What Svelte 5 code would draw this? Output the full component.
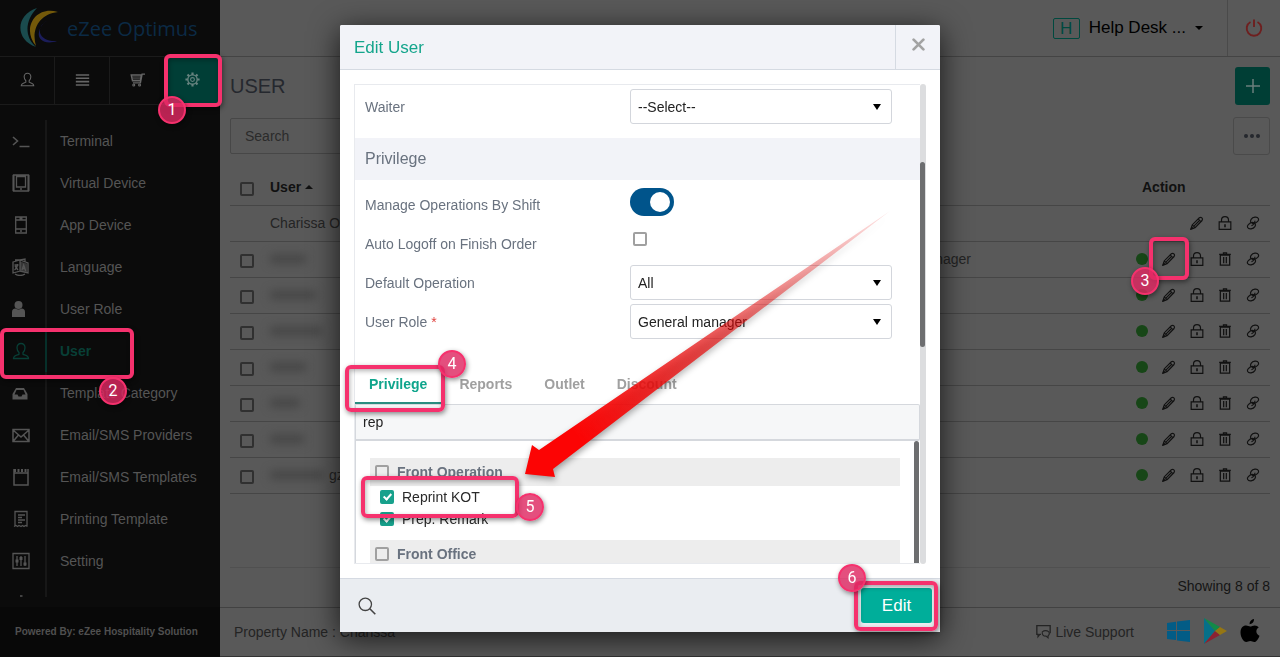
<script>
  // Back office - user list with the "Edit User" dialog and the numbered help steps
  let search = $state('');
  let privilegeSearch = $state('rep');
  let activeTab = $state('Privilege');
  let byShift = $state(true);
  let autoLogoff = $state(false);

  const menu = [
    { label: 'Terminal', icon: 'terminal' },
    { label: 'Virtual Device', icon: 'tablet' },
    { label: 'App Device', icon: 'phone' },
    { label: 'Language', icon: 'language' },
    { label: 'User Role', icon: 'role' },
    { label: 'User', icon: 'user', active: true },
    { label: 'Template Category', icon: 'inbox' },
    { label: 'Email/SMS Providers', icon: 'mail' },
    { label: 'Email/SMS Templates', icon: 'notepad' },
    { label: 'Printing Template', icon: 'receipt' },
    { label: 'Setting', icon: 'sliders' },
    { label: '', icon: 'dot' }
  ];

  // masked = width of the hidden part of the name
  const users = [
    { name: 'Charissa Owner', owner: true },
    { masked: 36, role: 'General manager', step: true },
    { masked: 46 },
    { masked: 52 },
    { masked: 36 },
    { masked: 30 },
    { masked: 34 },
    { masked: 54, name: 'gz' }
  ];

  const tabs = ['Privilege', 'Reports', 'Outlet', 'Discount'];

  let groups = $state([
    {
      name: 'Front Operation',
      checked: false,
      items: [
        { name: 'Reprint KOT', checked: true },
        { name: 'Prep. Remark', checked: true }
      ]
    },
    { name: 'Front Office', checked: false, items: [] }
  ]);
</script>

{#snippet icon(name)}
  <svg class="icon" viewBox="0 0 18 18" fill="none" stroke="currentColor" stroke-width="1.3" aria-hidden="true">
    {#if name === 'terminal'}
      <path d="M1 5l4.500 4-4.500 4M7.500 14.500h10" stroke-width="1.600" />
    {:else if name === 'tablet'}
      <path d="M1.500 1h15v16h-15zM4.500 2.500h9v10.500h-9z" /><path d="M1.500 1v16M16.500 1v16" stroke-width="2" /><path d="M8 15h2" />
    {:else if name === 'phone'}
      <path d="M3.700 1h10.600v16H3.700zM3.700 4h10.600M3.700 13h10.600M8 15h2M7.500 2.500h3" />
    {:else if name === 'language'}
      <path d="M1 4l7-2v11l-7 2zM8 2l8 3v10l-8-2M3 2l5 0 5-1v3M3 16q5 3 10 0" />
      <path d="M8 3.500l7 2v9l-7-2z" fill="currentColor" stroke="none" opacity=".6" />
      <path d="M2.500 7h4M5.500 6q0 4-3 6M3 8l3 4M10 12l1.700-5 2 6M10.500 10.500h3" />
    {:else if name === 'role'}
      <g transform="translate(-2.500 0)"><circle cx="9" cy="5" r="4" fill="currentColor" stroke="none" /><path d="M2.500 17V12q0-3.500 3.500-3.500 3 2 6 0 3.500 0 3.500 3.500v5z" fill="currentColor" stroke="none" /></g>
    {:else if name === 'user'}
      <path d="M9 1.500c-2.500 0-4 1.800-4 4.300 0 2 1 3.800 2 4.700v1.700c-1 .9-5.500 1-5.500 4.300h15c0-3.300-4.500-3.400-5.500-4.300v-1.700c1-.9 2-2.700 2-4.700 0-2.500-1.500-4.300-4-4.300z" />
    {:else if name === 'inbox'}
      <g transform="translate(-1 0)"><path d="M5 4h8l3.500 6v5.500h-15V10z" fill="currentColor" stroke="none" /><path d="M5.500 6h7l2 4.500h-3l-1 2h-3l-1-2h-3z" fill="#0b0b0b" stroke="none" /></g>
    {:else if name === 'mail'}
      <path d="M1 3.500h16v12H1zM1 4l8 7 8-7M1 15.500l5.500-6.500M17 15.500L11.500 9" stroke-width="1.500" />
    {:else if name === 'notepad'}
      <path d="M2 1v16h14V1M2 5h14" stroke-width="1.500" /><path d="M2 2.500h14" stroke-width="3" stroke-dasharray="2 1.500" />
    {:else if name === 'receipt'}
      <path d="M3 16V1.500h12V16M2 16.500l2-1 1.500 1 1.500-1 2 1 1.500-1 1.500 1 1.500-1 2 1M6 5h7M6 7.500h4M6 10h7M6 12.500h4" />
    {:else if name === 'sliders'}
      <path d="M1 1.500h16v15H1z" /><path d="M5 4v10M9 4v10M13 4v10" /><path d="M3.500 9h3M7.500 6.500h3M11.500 12h3" stroke-width="2.800" />
    {:else if name === 'dot'}
      <path d="M8 2h2.500M5 7h8v9H5z" />
    {:else if name === 'list'}
      <path d="M1 3.500h16M1 7.500h16M1 11.500h16M1 15.500h16" stroke-width="1.900" />
    {:else if name === 'cart'}
      <path d="M1.500 3.500h12l-1 7H3zM18 2.500h-3.500L12.500 13H3.500" stroke-width="1.700" /><path d="M2.500 6h10M3 8.300h9.500" stroke-width="1" /><circle cx="4.500" cy="15.500" r="1.200" /><circle cx="11.500" cy="15.500" r="1.200" />
    {:else if name === 'gear'}
      <circle cx="9" cy="9" r="5.600" stroke-width="1.600" /><circle cx="9" cy="9" r="2.300" />
      <path d="M9 .5v3M9 14.500v3M.5 9h3M14.500 9h3M3 3l2 2M13 13l2 2M3 15l2-2M13 5l2-2" stroke-width="2.600" />
    {:else if name === 'power'}
      <path d="M5.500 3A7.300 7.300 0 1 0 12.500 3M9 .5v7.500" stroke-width="1.900" />
    {:else if name === 'pencil'}
      <path d="M1.500 16.500l1.300-5L12 2.300q1.800-1.300 3.300.2t.2 3.300L6.500 15zM10.500 3.800l3.700 3.700M2.800 11.500l3.700 3.500M5 13L12.500 5.500" stroke-width="1.500" />
      <path d="M1 17l1-3 2 2z" fill="currentColor" />
    {:else if name === 'lock'}
      <path d="M1.500 7.500h15v9.800h-15zM4.500 7.500V5.300a4.500 4.500 0 0 1 9 0v2.200" stroke-width="1.500" /><path d="M9 11v3.500M8 11.500h2" stroke-width="2" />
    {:else if name === 'trash'}
      <path d="M3 4h12v13H3zM1.500 3.200h15M7 3V1h4v2" stroke-width="1.600" /><path d="M7.300 6.500v8M10.700 6.500v8" stroke-width="1.600" />
    {:else if name === 'link'}
      <path d="M6.500 8.500C4.500 6 7 2 11.500 1.500S17.500 4.500 15 7 9.500 10.500 7.500 9M11.500 9.500C13.500 12 11 16 6.500 16.500S.5 13.500 3 11 8.500 7.500 10.500 9M7 12.500q4.500-2 4.500-6.500" stroke-width="1.500" />
    {:else if name === 'search'}
      <circle cx="7.300" cy="7.300" r="6.200" /><path d="M11.800 11.800l5.500 5.500" stroke-width="1.600" />
    {:else if name === 'chat'}
      <path d="M6 12.500H4.500L2.500 15v-2.500H1V2h16v9" stroke-width="1.600" /><path d="M7.500 9.500q4-3 8 0 1.500 3-1 4.500v2.500L12 14.500q-5 0-4.500-5z" />
    {/if}
  </svg>
{/snippet}

<div class="page">
  <aside class="sidebar">
    <div class="brand">
      <svg width="40" height="40" viewBox="0 0 40 40" aria-hidden="true">
        <path d="M17 0C-5 7-5 32 16 39 4 29 5 12 17 0z" fill="#1a4b4e" />
        <path d="M38 4C16-3 1 20 16 38 11 22 19 6 38 4z" fill="#73590a" />
        <path d="M27 13c-12 6-9 21 10 20-11 4-20-1-18-9 1-5 4-9 8-11z" fill="#1b1d5a" />
      </svg>
      <span>eZee Optimus</span>
    </div>

    <nav class="modules" aria-label="Modules">
      <button type="button" aria-label="Account">{@render icon('user')}</button>
      <button type="button" aria-label="Orders">{@render icon('list')}</button>
      <button type="button" aria-label="Sales">{@render icon('cart')}</button>
      <button type="button" class="on" aria-label="Configuration">{@render icon('gear')}</button>
    </nav>

    <ul class="menu">
      {#each menu as item}
        <li>
          <a href="#menu" class:active={item.active} aria-label={item.label || 'More'}>
            <span class="menu-icon">{@render icon(item.icon)}</span>
            <span>{item.label}</span>
          </a>
        </li>
      {/each}
    </ul>

    <div class="powered">Powered By: eZee Hospitality Solution</div>

    <div class="mark mark-1"></div>
    <span class="badge badge-1">1</span>
    <div class="mark mark-2"></div>
    <span class="badge badge-2">2</span>
  </aside>

  <main class="main">
    <header class="topbar">
      <button type="button" class="account">
        <span class="initial">H</span>
        <span>Help Desk ...</span>
        <span class="caret down"></span>
      </button>
      <button type="button" class="power" aria-label="Log out">{@render icon('power')}</button>
    </header>

    <section class="content">
      <div class="title-row">
        <h1>USER</h1>
        <button type="button" class="add" aria-label="Add user">
          <svg width="14" height="14" viewBox="0 0 14 14" stroke="currentColor" stroke-width="1.500"><path d="M7 0v14M0 7h14" /></svg>
        </button>
      </div>
      <div class="search-row">
        <input type="text" placeholder="Search" aria-label="Search" bind:value={search} />
        <button type="button" class="more" aria-label="More options"><i></i><i></i><i></i></button>
      </div>

      <table>
        <thead>
          <tr>
            <th class="col-check"><input type="checkbox" aria-label="Select all" /></th>
            <th>User <span class="caret up"></span></th>
            <th class="col-role"></th>
            <th class="col-action">Action</th>
          </tr>
        </thead>
        <tbody>
          {#each users as user}
            <tr>
              <td>
                {#if !user.owner}<input type="checkbox" aria-label="Select user" />{/if}
              </td>
              <td>
                <div class="name">
                  {#if user.masked}<span class="masked" style="width: {user.masked}px"></span>{/if}
                  {user.name ?? ''}
                </div>
              </td>
              <td>{user.role ?? ''}</td>
              <td>
                <div class="actions">
                  {#if !user.owner}<span class="status"></span>{/if}
                  <button type="button" aria-label="Edit">{@render icon('pencil')}</button>
                  <button type="button" aria-label="Lock">{@render icon('lock')}</button>
                  {#if !user.owner}
                    <button type="button" aria-label="Delete">{@render icon('trash')}</button>
                  {/if}
                  <button type="button" aria-label="Link">{@render icon('link')}</button>
                  {#if user.step}
                    <div class="mark mark-3"></div>
                    <span class="badge badge-3">3</span>
                  {/if}
                </div>
              </td>
            </tr>
          {/each}
        </tbody>
      </table>

      <div class="showing">Showing 8 of 8</div>
    </section>

    <footer class="footer">
      <span>Property Name : Charissa</span>
      <div class="links">
        <a href="#support" class="support">{@render icon('chat')} Live Support</a>
        <a href="#windows" aria-label="Windows app">
          <svg width="24" height="24" viewBox="0 0 24 24" fill="#035c86"><path d="M1 4l9-1.300V11H1zM11 2.500L24 1v10H11zM1 12h9v9L1 20zM11 12h13v11l-13-1.500z" /></svg>
        </a>
        <a href="#android" aria-label="Android app">
          <svg width="24" height="26" viewBox="0 0 24 26">
            <path d="M1 0v26l11-13z" fill="#067089" />
            <path d="M1 0l16 9-5 4z" fill="#128a48" />
            <path d="M1 26l16-9-5-4z" fill="#8c2232" />
            <path d="M17 9l7 4-7 4-5-4z" fill="#957613" />
          </svg>
        </a>
        <a href="#ios" aria-label="iOS app">
          <svg width="20" height="24" viewBox="0 0 20 24" fill="#000"><path d="M14 0c.2 3-2 5.200-4.500 5.200C9.400 2.500 11.500.4 14 0zM18.800 8.300c-3.600 2.300-3 7 .7 8.400-1 3-3 6.300-5.200 6.300-1.600 0-2.200-1-4-1s-2.500 1-4 1C3.600 23 .5 18 .5 13.500.5 9 3 6.600 6 6.600c1.700 0 3 1 4.200 1 1.100 0 2.600-1.200 4.600-1.200 1.500 0 3.100.8 4 1.900z" /></svg>
        </a>
      </div>
    </footer>
  </main>
</div>

<div class="overlay">
  <div class="dialog" role="dialog" aria-labelledby="dialog-title">
    <header class="dialog-head">
      <h2 id="dialog-title">Edit User</h2>
      <button type="button" aria-label="Close">
        <svg width="13" height="13" viewBox="0 0 12 12" stroke="currentColor" stroke-width="2.500" stroke-linecap="round"><path d="M1.500 1.500l9 9M10.500 1.500l-9 9" /></svg>
      </button>
    </header>

    <div class="dialog-body">
      <div class="scroller">
        <div class="form">
          <div class="row waiter">
            <label for="waiter">Waiter</label>
            <div class="select">
              <select id="waiter"><option>--Select--</option></select>
            </div>
          </div>

          <h3>Privilege</h3>

          <div class="fields">
            <div class="row">
              <label for="shift">Manage Operations By Shift</label>
              <input id="shift" class="toggle" type="checkbox" role="switch" bind:checked={byShift} />
            </div>
            <div class="row">
              <label for="logoff">Auto Logoff on Finish Order</label>
              <input id="logoff" class="logoff" type="checkbox" bind:checked={autoLogoff} />
            </div>
            <div class="row">
              <label for="operation">Default Operation</label>
              <div class="select">
                <select id="operation"><option>All</option></select>
              </div>
            </div>
            <div class="row">
              <label for="role">User Role <em>*</em></label>
              <div class="select">
                <select id="role"><option>General manager</option></select>
              </div>
            </div>
          </div>

          <div class="tabs" role="tablist">
            {#each tabs as tab}
              <button
                type="button"
                role="tab"
                aria-selected={activeTab === tab}
                class:active={activeTab === tab}
                onclick={() => (activeTab = tab)}>{tab}</button>
            {/each}
          </div>
          <input class="filter" type="text" aria-label="Search privilege" bind:value={privilegeSearch} />

          <div class="privileges">
            <div class="privilege-list">
              {#each groups as group}
                <div class="group">
                  <label class="group-head">
                    <input type="checkbox" bind:checked={group.checked} />
                    {group.name}
                  </label>
                  {#each group.items as item}
                    <label class="item">
                      <input type="checkbox" bind:checked={item.checked} />
                      {item.name}
                    </label>
                  {/each}
                </div>
              {/each}
            </div>
            <div class="thumb"></div>
          </div>
        </div>
        <div class="track"><div class="thumb"></div></div>
      </div>
    </div>

    <footer class="dialog-foot">
      <button type="button" class="find" aria-label="Find">{@render icon('search')}</button>
      <button type="button" class="save">Edit</button>
    </footer>

    <!-- help steps drawn over the dialog -->
    <svg class="arrow" width="600" height="480" viewBox="0 0 600 480" aria-hidden="true">
      <defs>
        <linearGradient id="fade" gradientUnits="userSpaceOnUse" x1="550" y1="186" x2="240" y2="415">
          <stop offset="0" stop-color="#e60000" stop-opacity="0.1" />
          <stop offset="0.6" stop-color="#e80a0a" stop-opacity="0.7" />
          <stop offset="1" stop-color="#fc0404" />
        </linearGradient>
      </defs>
      <path d="M185 449L192 420L199 425L550 186L213 444L215 452Z" fill="url(#fade)" />
    </svg>
    <div class="mark mark-4"></div>
    <span class="badge badge-4">4</span>
    <div class="mark mark-5"></div>
    <span class="badge badge-5">5</span>
    <div class="mark mark-6"></div>
    <span class="badge badge-6">6</span>
  </div>
</div>

<style>
  :global(body) {
    background: #595959;
    overflow: hidden;
  }
  :global(#app) {
    font-family: 'Liberation Sans', Arial, sans-serif;
    font-size: 14px;
  }

  button {
    font: inherit;
    color: inherit;
    background: none;
    border: 0;
    padding: 0;
    display: flex;
    align-items: center;
    justify-content: center;
    cursor: pointer;
  }
  a {
    color: inherit;
    text-decoration: none;
  }
  h1, h2, h3 {
    margin: 0;
    font-weight: 400;
  }
  .icon {
    width: 18px;
    height: 18px;
    display: block;
    flex: none;
  }

  input[type='checkbox'] {
    appearance: none;
    box-sizing: border-box;
    width: 14px;
    height: 14px;
    margin: 0;
    border: 2px solid #a0a0a0;
    border-radius: 2px;
    flex: none;
    position: relative;
  }

  .page {
    display: grid;
    grid-template-columns: 220px 1fr;
    height: 100vh;
  }

  /* ---- sidebar ---- */
  .sidebar {
    position: relative;
    z-index: 1;
    display: flex;
    flex-direction: column;
    min-height: 0;
    background: #0b0b0b;
    color: #555;
  }
  .brand {
    display: flex;
    align-items: center;
    gap: 7px;
    height: 56px;
    padding-left: 20px;
    border-bottom: 1px solid #1b1b1b;
    font-family: 'Open Sans', sans-serif;
    font-size: 20px;
    color: #0b2a45;
  }
  .modules {
    display: grid;
    grid-template-columns: repeat(4, 1fr);
    height: 47px;
    border-bottom: 1px solid #1b1b1b;
    color: #666;
  }
  .modules button {
    padding-bottom: 2px;
    border-right: 1px solid #1b1b1b;
  }
  .modules .icon {
    width: 15px;
    height: 15px;
  }
  .modules .on {
    border-right: 0;
    background: #003e36;
    color: #66837f;
  }
  .menu {
    flex: 1;
    min-height: 0;
    overflow: hidden;
    list-style: none;
    margin: 15px 0 10px;
    padding: 0;
  }
  .menu a {
    display: flex;
    align-items: center;
    gap: 13px;
    height: 42px;
  }
  .menu-icon {
    box-sizing: border-box;
    display: flex;
    align-items: center;
    width: 47px;
    height: 42px;
    padding-left: 12px;
    border-right: 2px solid #171717;
  }
  .menu a.active {
    color: #083f36;
    font-weight: 700;
  }
  .menu a.active .menu-icon {
    border-color: #06302a;
  }
  .powered {
    height: 50px;
    line-height: 50px;
    padding-left: 15px;
    font-size: 10px;
    font-weight: 700;
    color: #505050;
    background: #080808;
  }

  /* ---- main area ---- */
  .main {
    display: flex;
    flex-direction: column;
    min-width: 0;
    background: #595959;
    color: #242424;
  }
  .topbar {
    display: flex;
    justify-content: flex-end;
    height: 56px;
    border-bottom: 1px solid #444;
  }
  .account {
    gap: 9px;
    padding-right: 24px;
    font-size: 17px;
    color: #000;
  }
  .initial {
    width: 25px;
    line-height: 19px;
    border: 1px solid #00493f;
    border-radius: 2px;
    color: #00493f;
    text-align: center;
  }
  .caret {
    display: inline-block;
    border: 4px solid transparent;
  }
  .caret.down {
    border-top-color: #000;
    border-bottom: 0;
  }
  .caret.up {
    border-bottom-color: #111;
    border-top: 0;
    vertical-align: 3px;
  }
  .power {
    width: 53px;
    border-left: 1px solid #4a4a4a;
    color: #6e1f1f;
  }

  .content {
    flex: 1;
    padding: 10px 10px 0;
    display: flex;
    flex-direction: column;
  }
  .title-row,
  .search-row {
    display: flex;
    align-items: center;
    justify-content: space-between;
  }
  .title-row h1 {
    font-size: 20px;
    color: #25282e;
  }
  .add {
    width: 35px;
    height: 38px;
    border-radius: 3px;
    background: #003e35;
    color: #6b7f7c;
  }
  .search-row {
    margin-top: 12px;
  }
  .search-row input {
    box-sizing: border-box;
    width: 320px;
    height: 36px;
    padding: 0 14px;
    border: 1px solid #474747;
    border-radius: 2px;
    background: none;
    font: inherit;
  }
  .search-row input::placeholder {
    color: #2b2b2b;
  }
  .more {
    gap: 2px;
    width: 37px;
    height: 38px;
    border: 1px solid #4a4a4a;
    border-radius: 3px;
  }
  .more i {
    width: 4px;
    height: 4px;
    border-radius: 50%;
    background: #25282e;
  }

  table {
    width: 100%;
    margin-top: 14px;
    border-collapse: collapse;
    table-layout: fixed;
  }
  th, td {
    box-sizing: border-box;
    height: 36px;
    padding: 0;
    border-bottom: 1px solid #464646;
    text-align: left;
    white-space: nowrap;
  }
  th {
    color: #111;
  }
  .col-check { width: 40px; }
  .col-role { width: 280px; }
  .col-action { width: 128px; }
  table input[type='checkbox'] {
    display: block;
    margin: 4px 0 0 10px;
    border-color: #303030;
  }
  .name {
    display: flex;
    align-items: center;
    gap: 5px;
  }
  .masked {
    height: 10px;
    background: #484848;
    filter: blur(4px);
  }
  .actions {
    position: relative;
    display: flex;
    align-items: center;
    justify-content: flex-end;
    gap: 14px;
    padding-right: 10px;
    color: #111;
  }
  .actions .icon {
    width: 14px;
    height: 14px;
  }
  .status {
    flex: none;
    width: 12px;
    height: 12px;
    border-radius: 50%;
    background: #174617;
  }
  .col-action {
    white-space: nowrap;
  }
  .showing {
    margin-top: auto;
    height: 39px;
    line-height: 37px;
    border-top: 1px solid #505050;
    text-align: right;
    color: #151515;
  }
  .footer {
    display: flex;
    align-items: center;
    justify-content: space-between;
    height: 48px;
    padding: 0 20px 0 14px;
    border-top: 1px solid #424242;
    border-bottom: 1px solid #333;
  }
  .links {
    display: flex;
    align-items: center;
    gap: 13px;
  }
  .support {
    display: flex;
    gap: 4px;
    margin-right: 19px;
  }
  .support .icon {
    width: 15px;
    height: 15px;
  }

  /* ---- dialog ---- */
  .overlay {
    position: fixed;
    inset: 0;
    z-index: 10;
    display: flex;
    align-items: flex-start;
    justify-content: center;
    padding-top: 25px;
  }
  .dialog {
    position: relative;
    width: 600px;
    background: #fff;
    border-radius: 2px;
    box-shadow: 0 6px 30px rgba(0, 0, 0, 0.75);
    color: #69727f;
  }
  .dialog-head {
    display: flex;
    justify-content: space-between;
    height: 44px;
    border-bottom: 1px solid #d5dae2;
    border-radius: 2px 2px 0 0;
    background: #f2f3f8;
  }
  .dialog-head h2 {
    padding-left: 14px;
    line-height: 45px;
    font-size: 17px;
    color: #14a58c;
  }
  .dialog-head button {
    width: 45px;
    padding-bottom: 6px;
    border-left: 1px solid #d5dae2;
    color: #a3a3a3;
  }
  .dialog-body {
    padding: 14px;
  }
  .scroller {
    display: flex;
    height: calc(100vh - 177px);
    overflow: hidden;
  }
  .form {
    flex: 1;
    box-sizing: border-box;
    border: 1px solid #e8eaee;
    border-right: 0;
    overflow: hidden;
  }
  .track {
    width: 6px;
    background: #dcdddf;
    border-radius: 3px;
    padding-top: 78px;
    box-sizing: border-box;
  }
  .thumb {
    width: 5px;
    background: #6d6e70;
    border-radius: 3px;
  }
  .track .thumb {
    height: 185px;
  }
  .row {
    display: grid;
    grid-template-columns: 265px 262px;
    align-items: start;
    height: 39px;
    padding-left: 10px;
  }
  .row.waiter {
    height: 49px;
    padding-top: 4px;
  }
  .row label {
    line-height: 37px;
  }
  .row em {
    font-style: normal;
    color: #e0433f;
  }
  h3 {
    height: 42px;
    line-height: 42px;
    padding-left: 10px;
    font-size: 16px;
    background: #f2f3f8;
  }
  .fields {
    padding-top: 7px;
  }
  .select {
    position: relative;
  }
  .select::after {
    content: '';
    position: absolute;
    right: 11px;
    top: 15px;
    border: 4px solid transparent;
    border-top: 6px solid #000;
    border-bottom: 0;
    pointer-events: none;
  }
  select {
    appearance: none;
    box-sizing: border-box;
    width: 100%;
    height: 35px;
    padding: 0 7px;
    border: 1px solid #d3d6dc;
    border-radius: 3px;
    background: #fff;
    font: inherit;
    color: #222;
  }
  .row input.toggle {
    width: 44px;
    height: 28px;
    margin-top: 1px;
    border: 0;
    border-radius: 14px;
    background: #9aa4ad;
  }
  .row input.toggle::after {
    content: '';
    position: absolute;
    top: 4px;
    left: 4px;
    width: 20px;
    height: 20px;
    border-radius: 50%;
    background: #fff;
  }
  .row input.toggle:checked {
    background: #00548b;
  }
  .row input.toggle:checked::after {
    left: 20px;
  }
  .row input.logoff {
    margin: 6px 0 0 3px;
  }

  .tabs {
    display: flex;
    gap: 4px;
    height: 40px;
    margin-top: 21px;
  }
  .tabs button {
    padding: 2px 14px 0;
    font-weight: 700;
    color: #a0a0a0;
    border-bottom: 2px solid transparent;
  }
  .tabs button.active {
    color: #0fa58c;
    border-bottom-color: #2a8d80;
  }
  .filter {
    display: block;
    box-sizing: border-box;
    width: 100%;
    height: 37px;
    padding: 0 7px;
    border: 1px solid #d5d8dd;
    border-bottom-width: 2px;
    border-radius: 0 2px 2px 0;
    background: #f6f7f8;
    font: inherit;
    color: #222;
  }
  .privileges {
    display: flex;
    height: 124px;
    margin-right: 1px;
    border-left: 1px solid #d5d8dd;
  }
  .privilege-list {
    flex: 1;
    padding: 17px 14px;
  }
  .group {
    margin-bottom: 10px;
  }
  .group-head,
  .item {
    display: flex;
    align-items: center;
    gap: 8px;
  }
  .group-head {
    height: 28px;
    padding-left: 5px;
    background: #ededed;
    font-weight: 700;
  }
  .item {
    height: 22px;
    padding-left: 10px;
    color: #2a2a2a;
  }
  .item input:checked {
    border-color: #17a18c;
    background: #17a18c;
  }
  .item input:checked::after {
    content: '';
    position: absolute;
    left: 3px;
    top: 0;
    width: 3px;
    height: 6px;
    border: solid #fff;
    border-width: 0 2px 2px 0;
    transform: rotate(42deg);
  }
  .dialog-foot {
    display: flex;
    align-items: center;
    justify-content: space-between;
    height: 53px;
    padding: 0 8px 0 18px;
    border-top: 1px solid #d5dae2;
    background: #eaedf1;
  }
  .find {
    color: #444;
  }
  .save {
    width: 71px;
    height: 35px;
    border-radius: 3px;
    background: #00ae9a;
    color: #fff;
    font-size: 17px;
  }

  /* ---- numbered help steps ---- */
  .mark {
    position: absolute;
    box-sizing: border-box;
    border: 4px solid #f5316d;
    border-radius: 6px;
    box-shadow: 1px 2px 5px rgba(0, 0, 0, 0.45), inset 1px 2px 5px rgba(0, 0, 0, 0.3);
    pointer-events: none;
  }
  .badge {
    position: absolute;
    box-sizing: border-box;
    width: 28px;
    height: 28px;
    border: 2px solid #f5316d;
    border-radius: 50%;
    background: rgba(222, 40, 98, 0.82);
    box-shadow: 1px 2px 5px rgba(0, 0, 0, 0.45);
    color: #fff;
    font-family: Roboto, sans-serif;
    font-size: 16px;
    line-height: 23px;
    text-align: center;
  }
  .mark-1 { left: 164px; top: 54px; width: 58px; height: 53px; }
  .badge-1 { left: 158px; top: 96px; }
  .mark-2 { left: 0; top: 328px; width: 134px; height: 51px; }
  .badge-2 { left: 99px; top: 377px; }
  .mark-3 { right: 81px; top: -15px; width: 40px; height: 43px; }
  .badge-3 { right: 111px; top: 15px; z-index: 1; }
  .mark-4 { left: 5px; top: 340px; width: 100px; height: 47px; }
  .badge-4 { left: 98px; top: 325px; }
  .mark-5 { left: 21px; top: 451px; width: 158px; height: 42px; }
  .badge-5 { left: 176px; top: 468px; }
  .mark-6 { left: 514px; top: 556px; width: 84px; height: 50px; }
  .badge-6 { left: 498px; top: 539px; }
  .arrow {
    position: absolute;
    left: 0;
    top: 0;
    pointer-events: none;
    filter: drop-shadow(1px 3px 3px rgba(0, 0, 0, 0.35));
  }
</style>
